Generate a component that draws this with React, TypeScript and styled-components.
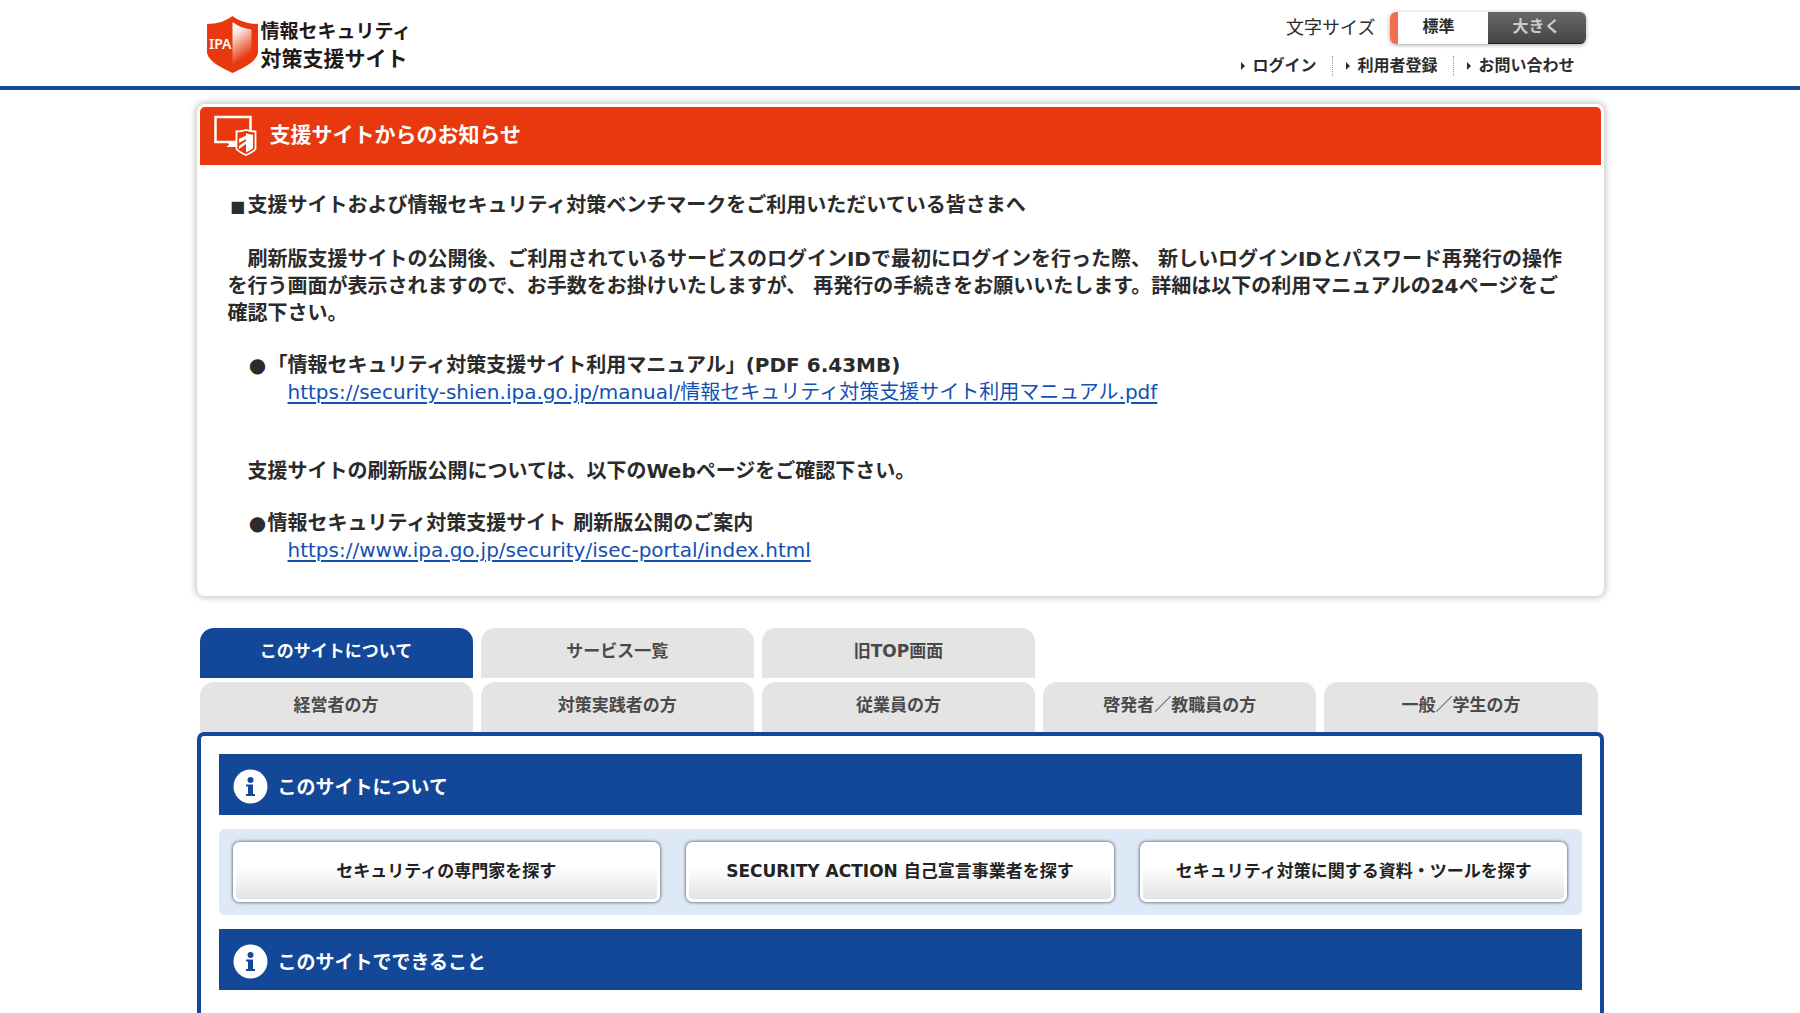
import React, { useState } from "react";
import styled, { createGlobalStyle } from "styled-components";

const BLUE = "#134798";
const RED = "#e8380d";

const GlobalStyle = createGlobalStyle`
  * { box-sizing: border-box; }
  body {
    margin: 0;
    background: #fff;
    color: #2b2b2b;
    font-family: "DejaVu Sans", "Noto Sans CJK JP", sans-serif;
    font-size: 16px;
  }
  button { font-family: inherit; cursor: pointer; }
  h1, h2, p, ul { margin: 0; padding: 0; }
`;

const Page = styled.div`
  min-height: 100vh;
  display: flex;
  flex-direction: column;
`;

const Container = styled.div`
  width: 100%;
  max-width: 1407px;
  margin: 0 auto;
`;

const Header = styled.header`
  border-bottom: 4px solid ${BLUE};
`;

const HeaderInner = styled(Container)`
  display: flex;
  justify-content: space-between;
  align-items: flex-start;
  padding: 12px 18px 10px 10px;
`;

const Logo = styled.a`
  display: flex;
  align-items: center;
  gap: 3px;
  padding-top: 4px;
  color: #231815;
  text-decoration: none;
`;

const LogoText = styled.span`
  display: flex;
  flex-direction: column;
  font-weight: 700;
  line-height: 28px;
`;

const LogoLine = styled.span<{ $large?: boolean }>`
  font-size: ${(p) => (p.$large ? 21 : 19)}px;
`;

const Tools = styled.div`
  display: flex;
  flex-direction: column;
  align-items: flex-end;
  gap: 12px;
`;

const FontSize = styled.div`
  display: flex;
  align-items: center;
  gap: 14px;
  font-size: 18px;
  line-height: 26px;
`;

const SizeGroup = styled.div`
  display: flex;
  border-radius: 6px;
  box-shadow: 0 1px 4px rgba(0, 0, 0, 0.35);
  overflow: hidden;
`;

const SizeButton = styled.button<{ $active: boolean }>`
  width: 98px;
  height: 32px;
  padding: 0 0 2px;
  border: 0;
  background: ${(p) =>
    p.$active ? "#fff" : "linear-gradient(#686868, #444)"};
  box-shadow: ${(p) =>
    p.$active ? "inset 8px 0 #f07050" : "inset 0 -1px #222"};
  color: ${(p) => (p.$active ? "#2b2b2b" : "#ccc")};
  font-size: 16px;
  line-height: 26px;
  font-weight: 700;
`;

const Nav = styled.nav`
  display: flex;
  align-items: center;
  padding-right: 11px;
`;

const NavLink = styled.a`
  display: flex;
  align-items: center;
  gap: 7px;
  color: #2b2b2b;
  font-size: 16px;
  line-height: 20px;
  font-weight: 700;
  text-decoration: none;

  &::before {
    content: "";
    border: 4px solid transparent;
    border-left-color: #2b2b2b;
    border-right: 0;
  }
  & + & {
    margin-left: 16px;
    padding-left: 13px;
    border-left: 1px dotted #999;
  }
`;

const Notice = styled.section`
  margin-top: 14px;
  padding: 3px;
  border-radius: 8px;
  background: #fff;
  box-shadow: 0 0 6px 2px rgba(0, 0, 0, 0.22);
`;

const NoticeTitle = styled.h2`
  display: flex;
  align-items: center;
  gap: 13px;
  height: 58px;
  padding: 0 14px 2px;
  border-radius: 5px 5px 0 0;
  background: ${RED};
  color: #fff;
  font-size: 21px;
  line-height: 30px;
`;

const NoticeBody = styled.div`
  padding: 27px 28px 29px;
  font-size: 20px;
  line-height: 27px;
  font-weight: 700;
`;

const Paragraph = styled.p<{ $indent?: boolean; $first?: boolean }>`
  margin-top: ${(p) => (p.$first ? 0 : 26)}px;
  padding-left: ${(p) => (p.$indent ? 20 : 0)}px;
`;

const Reference = styled(Paragraph)`
  margin-top: 25px;
  padding-left: 20px;
`;

const Bullet = styled.span<{ $small?: boolean }>`
  display: inline-block;
  width: 20px;
  font-size: ${(p) => (p.$small ? 16 : 20)}px;
  text-align: center;
`;

const Spacer = styled.div`
  height: 26px;
`;

const ReferenceLink = styled.a`
  display: block;
  margin-left: 40px;
  color: #1450b4;
  font-weight: 400;
  text-underline-offset: 3px;
`;

const Tabs = styled.div`
  display: grid;
  grid-template-columns: repeat(5, 1fr);
  gap: 4px 8px;
  margin-top: 32px;
  padding: 0 6px 0 3px;
`;

const Tab = styled.button<{ $active?: boolean; $first?: boolean }>`
  height: 50px;
  padding: 0 0 4px;
  border: 0;
  border-radius: 14px 14px 0 0;
  grid-column-start: ${(p) => (p.$first ? 1 : "auto")};
  background: ${(p) => (p.$active ? BLUE : "#e4e4e4")};
  color: ${(p) => (p.$active ? "#fff" : "#4a4a4a")};
  font-size: 17px;
  line-height: 26px;
  font-weight: 700;
`;

const PanelColumn = styled(Container)`
  flex: 1;
  display: flex;
  flex-direction: column;
`;

const Panel = styled.main`
  flex: 1;
  padding: 18px;
  border: 4px solid ${BLUE};
  border-bottom: 0;
  border-radius: 7px 7px 0 0;
`;

const SectionTitle = styled.h2`
  display: flex;
  align-items: center;
  gap: 10px;
  height: 61px;
  padding: 4px 14px 0;
  background: ${BLUE};
  color: #fff;
  font-size: 19px;
  line-height: 28px;
`;

const ButtonBar = styled.div`
  display: grid;
  grid-template-columns: repeat(3, 1fr);
  gap: 26px;
  margin: 14px 0;
  padding: 13px 14px;
  border-radius: 6px;
  background: #dee9f7;
`;

const SearchButton = styled.button`
  height: 60px;
  padding: 0 0 2px;
  border: 3px solid #fff;
  border-radius: 7px;
  background: linear-gradient(#fff 40%, #e3e3e3) padding-box;
  box-shadow: 0 0 3px 1px rgba(0, 0, 0, 0.45);
  color: #222;
  font-size: 17px;
  line-height: 26px;
  font-weight: 700;
`;

function ShieldLogo() {
  return (
    <svg width="51" height="57" viewBox="0 0 51 57" aria-hidden="true">
      <defs>
        <linearGradient id="shine" x1="0" y1="0" x2="0.3" y2="1">
          <stop offset="0" stopColor="#fff" />
          <stop offset="0.3" stopColor="#fff" stopOpacity="0.85" />
          <stop offset="0.9" stopColor="#fff" stopOpacity="0" />
        </linearGradient>
      </defs>
      <path
        d="M25.5 0C32 5 41 8 51 8V37C49 46 36 52 25.5 57C15 52 2 46 0 37V8C10 8 19 5 25.5 0Z"
        fill={RED}
      />
      <path
        d="M25.5 6C31 10 37 12.5 44.5 13.5V34C44 42 34 47 25.5 51Z"
        fill="url(#shine)"
      />
      <text
        x="2"
        y="33"
        fontSize="14"
        fontFamily="Noto Sans"
        fontWeight="600"
        fill="#fff"
      >
        IPA
      </text>
    </svg>
  );
}

function NoticeIcon() {
  return (
    <svg width="43" height="41" viewBox="0 0 43 41" fill="none" aria-hidden="true">
      <rect x="1.5" y="2" width="35" height="25" stroke="#fff" strokeWidth="2.5" />
      <path d="M14 27h9v5H12l3-2z" fill="#fff" />
      <path
        d="M32 15c3.5 1 6 1.5 9.5 1.5V34c-2 2.5-6 4.5-9.5 6-3.5-1.5-7.5-3.5-9.5-6V16.5c3.5 0 6-.5 9.5-1.5Z"
        fill={RED}
        stroke="#fff"
        strokeWidth="1.8"
      />
      <path d="M32 18c2 1 4.5 1.5 7 1.7V33c-1 1.5-4 3-7 4.3z" fill="#fff" />
      <path d="M25 24l7-3.5v3.500l-7 4zM25 31l7-5v3l-7 5z" fill="#fff" />
    </svg>
  );
}

function InfoIcon() {
  return (
    <svg width="35" height="35" viewBox="0 0 35 35" aria-hidden="true">
      <circle cx="17.5" cy="17.5" r="17" fill="#fff" />
      <circle cx="17.5" cy="11" r="3" fill={BLUE} />
      <path d="M13 15.5h7v9.5h2v2H13v-2h2v-7.5h-2z" fill={BLUE} />
    </svg>
  );
}

const TABS = [
  "このサイトについて",
  "サービス一覧",
  "旧TOP画面",
  "経営者の方",
  "対策実践者の方",
  "従業員の方",
  "啓発者／教職員の方",
  "一般／学生の方",
];

const SEARCHES = [
  "セキュリティの専門家を探す",
  "SECURITY ACTION 自己宣言事業者を探す",
  "セキュリティ対策に関する資料・ツールを探す",
];

export default function App() {
  const [tab, setTab] = useState(0);
  const [large, setLarge] = useState(false);

  return (
    <Page lang="ja">
      <GlobalStyle />
      <Header>
        <HeaderInner>
          <Logo href="#">
            <ShieldLogo />
            <LogoText>
              <LogoLine>情報セキュリティ</LogoLine>
              <LogoLine $large>対策支援サイト</LogoLine>
            </LogoText>
          </Logo>
          <Tools>
            <FontSize>
              <span id="size-label">文字サイズ</span>
              <SizeGroup role="group" aria-labelledby="size-label">
                <SizeButton $active={!large} onClick={() => setLarge(false)}>
                  標準
                </SizeButton>
                <SizeButton $active={large} onClick={() => setLarge(true)}>
                  大きく
                </SizeButton>
              </SizeGroup>
            </FontSize>
            <Nav>
              <NavLink href="#login">ログイン</NavLink>
              <NavLink href="#register">利用者登録</NavLink>
              <NavLink href="#contact">お問い合わせ</NavLink>
            </Nav>
          </Tools>
        </HeaderInner>
      </Header>

      <Container>
        <Notice>
          <NoticeTitle>
            <NoticeIcon />
            支援サイトからのお知らせ
          </NoticeTitle>
          <NoticeBody>
            <Paragraph $first>
              <Bullet $small>■</Bullet>
              支援サイトおよび情報セキュリティ対策ベンチマークをご利用いただいている皆さまへ
            </Paragraph>
            <Paragraph>
              {"\u3000"}刷新版支援サイトの公開後、ご利用されているサービスのログインIDで最初にログインを行った際、
              新しいログインIDとパスワード再発行の操作を行う画面が表示されますので、お手数をお掛けいたしますが、
              再発行の手続きをお願いいたします。詳細は以下の利用マニュアルの24ページをご確認下さい。
            </Paragraph>
            <Reference>
              <Bullet>●</Bullet>
              「情報セキュリティ対策支援サイト利用マニュアル」(PDF 6.43MB)
              <ReferenceLink href="#manual">
                https://security-shien.ipa.go.jp/manual/情報セキュリティ対策支援サイト利用マニュアル.pdf
              </ReferenceLink>
            </Reference>
            <Spacer />
            <Paragraph $indent>
              支援サイトの刷新版公開については、以下のWebページをご確認下さい。
            </Paragraph>
            <Reference>
              <Bullet>●</Bullet>
              情報セキュリティ対策支援サイト 刷新版公開のご案内
              <ReferenceLink href="#portal">
                https://www.ipa.go.jp/security/isec-portal/index.html
              </ReferenceLink>
            </Reference>
          </NoticeBody>
        </Notice>

        <Tabs role="tablist">
          {TABS.map((label, i) => (
            <Tab
              key={label}
              role="tab"
              aria-selected={tab === i}
              $active={tab === i}
              $first={i === 3}
              onClick={() => setTab(i)}
            >
              {label}
            </Tab>
          ))}
        </Tabs>
      </Container>

      <PanelColumn>
        <Panel>
          <SectionTitle>
            <InfoIcon />
            このサイトについて
          </SectionTitle>
          <ButtonBar>
            {SEARCHES.map((label) => (
              <SearchButton key={label}>{label}</SearchButton>
            ))}
          </ButtonBar>
          <SectionTitle>
            <InfoIcon />
            このサイトでできること
          </SectionTitle>
        </Panel>
      </PanelColumn>
    </Page>
  );
}
